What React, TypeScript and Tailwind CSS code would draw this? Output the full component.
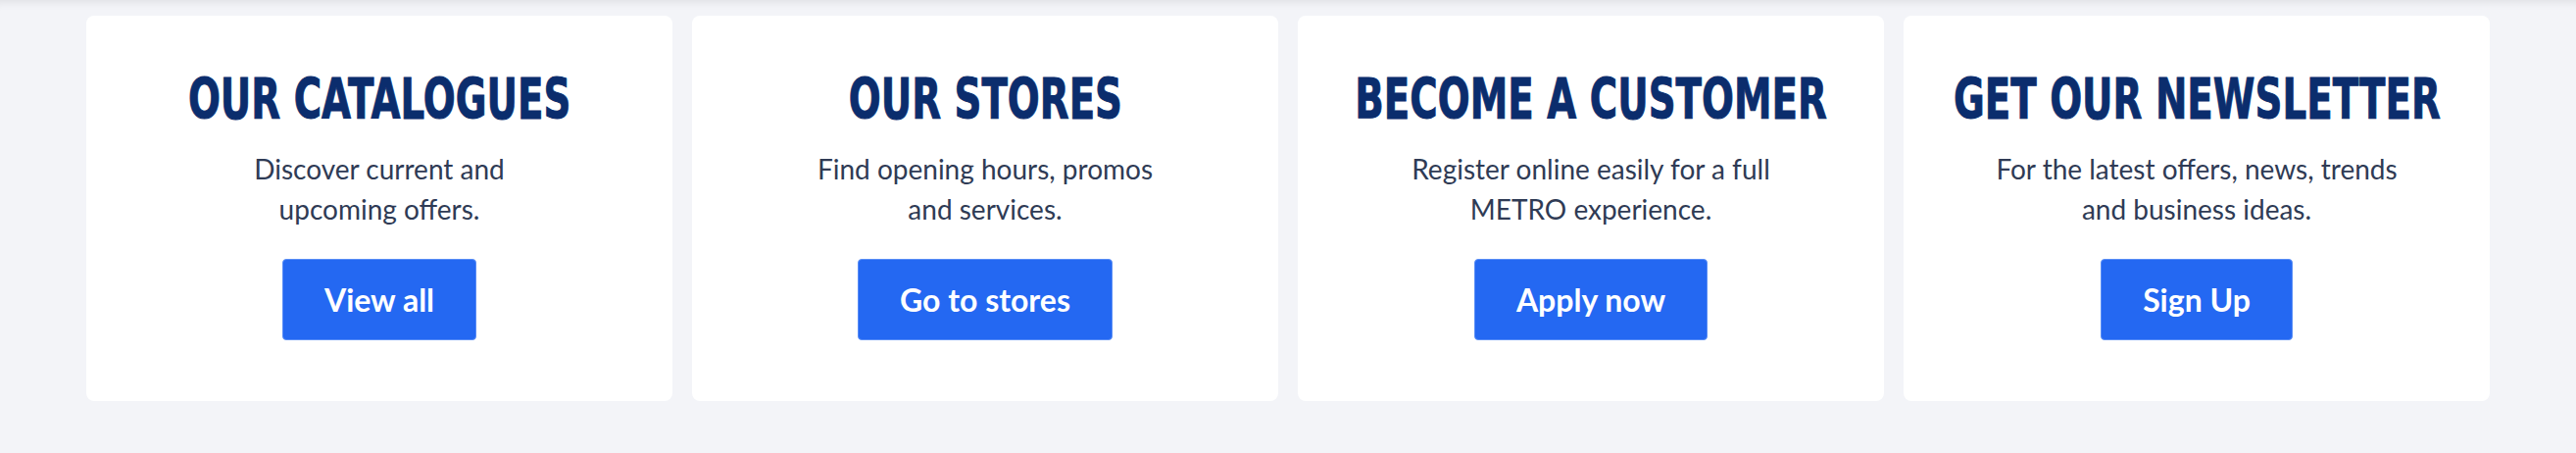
import React from 'react';

type Card = {
  title: string;
  lines: [string, string];
  cta: string;
};

const cards: Card[] = [
  { title: 'OUR CATALOGUES', lines: ['Discover current and', 'upcoming offers.'], cta: 'View all' },
  { title: 'OUR STORES', lines: ['Find opening hours, promos', 'and services.'], cta: 'Go to stores' },
  { title: 'BECOME A CUSTOMER', lines: ['Register online easily for a full', 'METRO experience.'], cta: 'Apply now' },
  { title: 'GET OUR NEWSLETTER', lines: ['For the latest offers, news, trends', 'and business ideas.'], cta: 'Sign Up' },
];

function InfoCard({ card }: { card: Card }) {
  return (
    <div className="flex h-[393px] flex-col items-center rounded-[8px] bg-white pt-[57px]">
      <h2 className="origin-center scale-x-[0.68] font-['DejaVu_Sans',sans-serif] text-[57px] font-bold leading-[57px] text-[#0b2d6d] whitespace-nowrap [-webkit-text-stroke:1px_#0b2d6d]">
        {card.title}
      </h2>
      <p className="mt-[22px] text-center font-['Lato',sans-serif] text-[28px] leading-[41px] text-[#2f3b55]">
        {card.lines[0]}
        <br />
        {card.lines[1]}
      </p>
      <button
        type="button"
        className="mt-[30px] h-[83px] rounded-[4px] border border-[#5a8ef6] bg-[#2468f2] px-[42px] font-['Lato',sans-serif] text-[32px] font-bold text-white"
      >
        {card.cta}
      </button>
    </div>
  );
}

export default function App() {
  return (
    <div className="h-[462px] w-full bg-[#f3f4f8] px-[88px] pt-[16px] shadow-[inset_0_10px_10px_-8px_rgba(0,0,0,0.09)]">
      <div className="grid grid-cols-4 gap-[20px]">
        {cards.map((c) => (
          <InfoCard key={c.title} card={c} />
        ))}
      </div>
    </div>
  );
}
